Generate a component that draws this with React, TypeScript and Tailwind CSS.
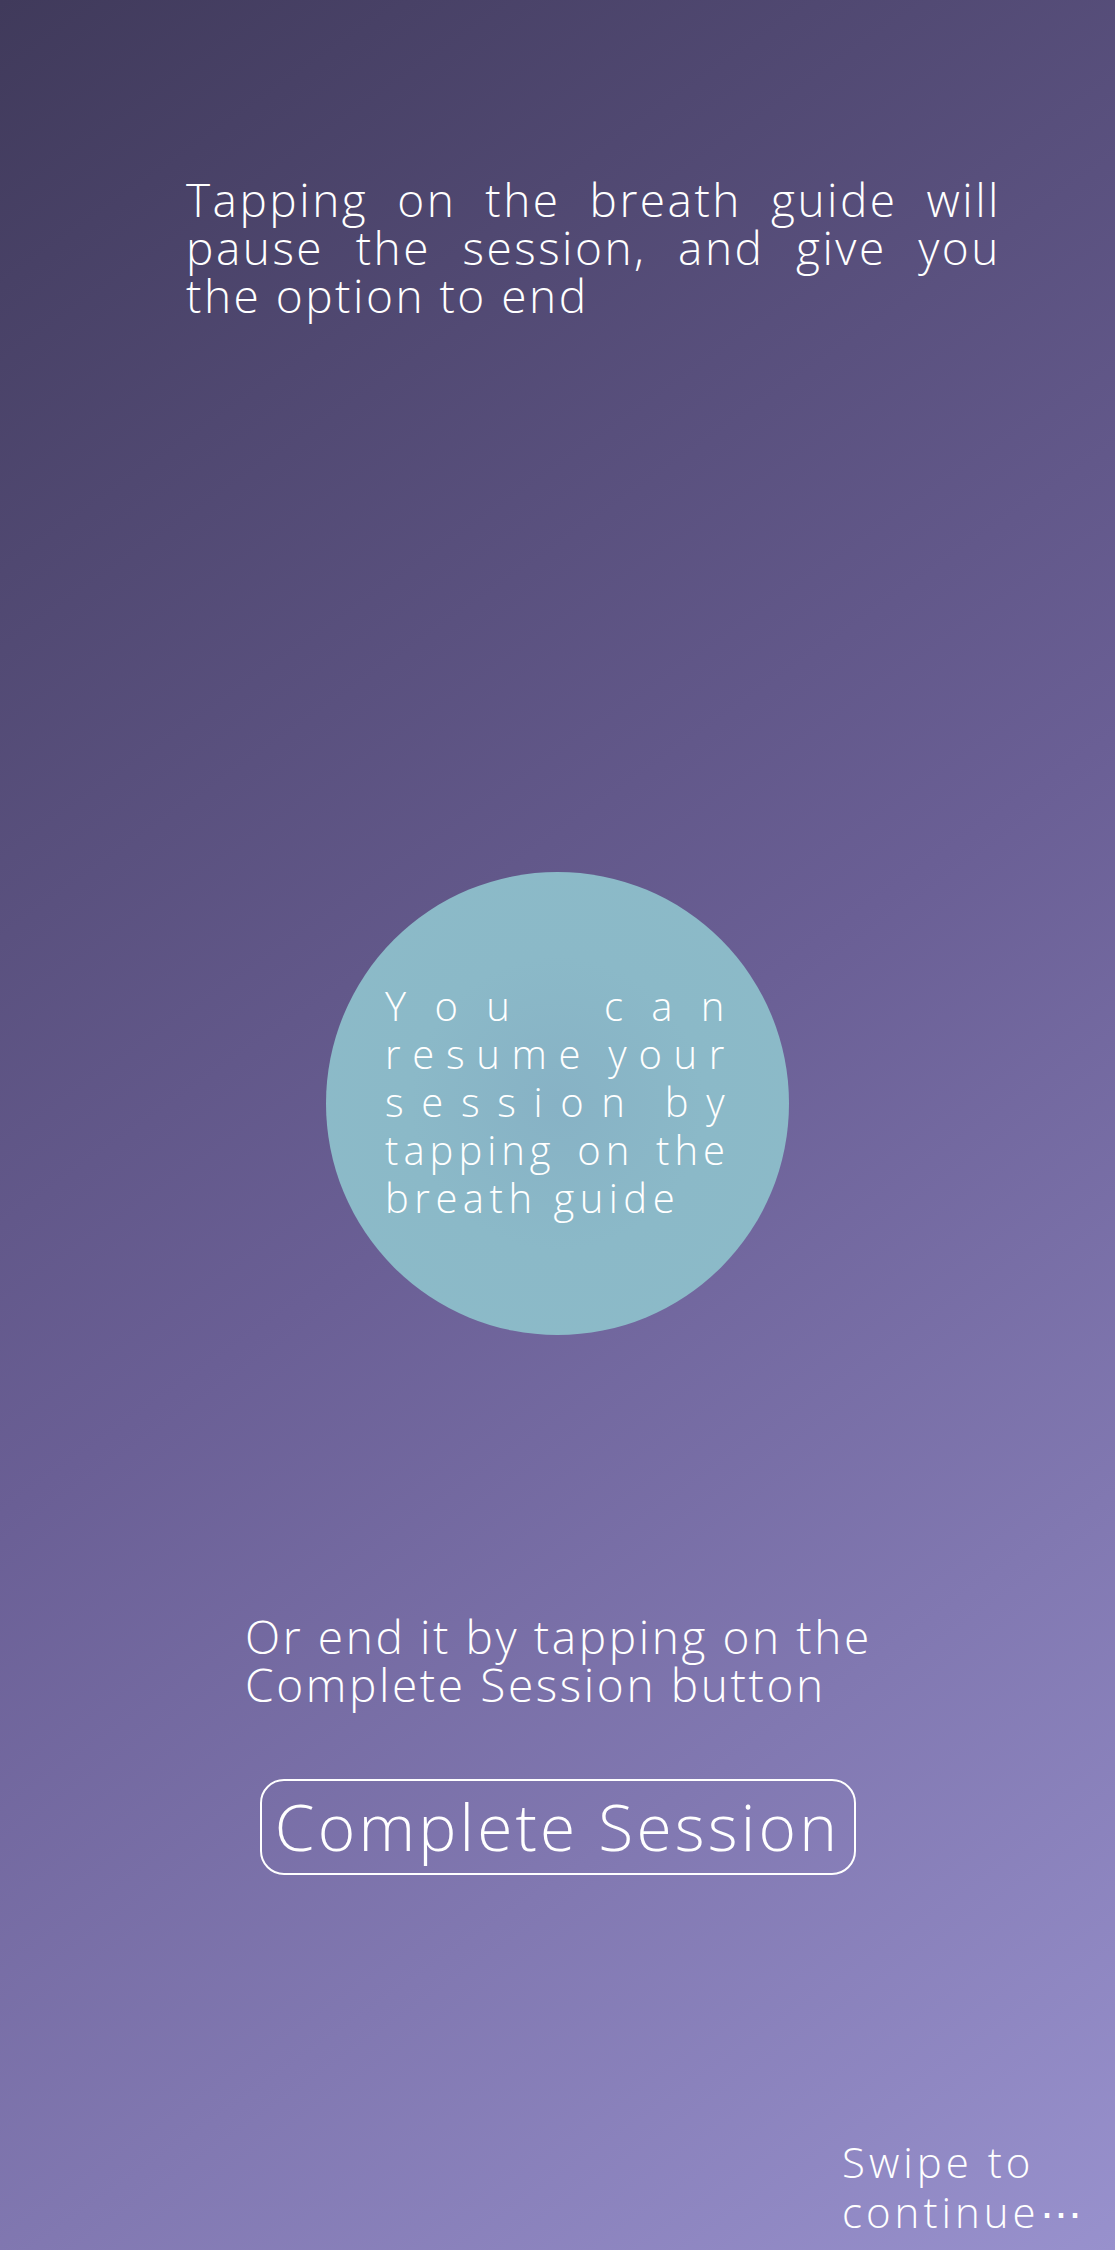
import React from "react";

const font = { fontFamily: '"Open Sans", "Liberation Sans", sans-serif' };

function CharLine({ text }: { text: string }) {
  return (
    <div className="flex justify-between">
      {text.split("").map((c, i) =>
        c === " " ? (
          <span key={i} className="inline-block w-[10px]">
            {"\u00a0"}
          </span>
        ) : (
          <span key={i}>{c}</span>
        )
      )}
    </div>
  );
}

export default function App() {
  return (
    <div
      className="w-full h-[2250px] overflow-hidden flex flex-col text-white font-light bg-[linear-gradient(145deg,#403a5b_0%,#6a5f95_50%,#9891cd_100%)]"
      style={font}
    >
      <div className="mt-[175px] ml-[186px] w-[815px] text-[46px] leading-[48px] tracking-[2.5px]">
        <div className="text-justify [text-align-last:justify]">Tapping on the breath guide will</div>
        <div className="text-justify [text-align-last:justify]">pause the session, and give you</div>
        <div>the option to end</div>
      </div>

      <div className="mt-[553px] mx-auto w-[463px] h-[463px] rounded-full flex items-center justify-center bg-[radial-gradient(circle,#87b2c5_0%,#8bb9c8_45%,#8cbbc8_100%)]">
        <div className="w-[345px] text-[40px] leading-[48px] tracking-[5.5px] pb-[4px]">
          <CharLine text="You  can" />
          <CharLine text="resume your" />
          <CharLine text="session by" />
          <div className="text-justify [text-align-last:justify] whitespace-nowrap tracking-[5px]">tapping on the</div>
          <div>breath guide</div>
        </div>
      </div>

      <div className="mt-[277px] mx-auto w-[625px] text-[46px] leading-[48px] tracking-[2.6px] whitespace-nowrap">
        <div>Or end it by tapping on the</div>
        <div>Complete Session button</div>
      </div>

      <button className="mt-[71px] mx-auto w-[596px] h-[96px] rounded-[24px] border-2 border-white flex items-center justify-center text-[64px] leading-none font-light text-white tracking-[3.2px]">
        Complete Session
      </button>

      <div className="mt-[262px] ml-[842px] text-[42px] leading-[50px] tracking-[4px] whitespace-nowrap">
        <div>Swipe to</div>
        <div>continue⋯</div>
      </div>
    </div>
  );
}
